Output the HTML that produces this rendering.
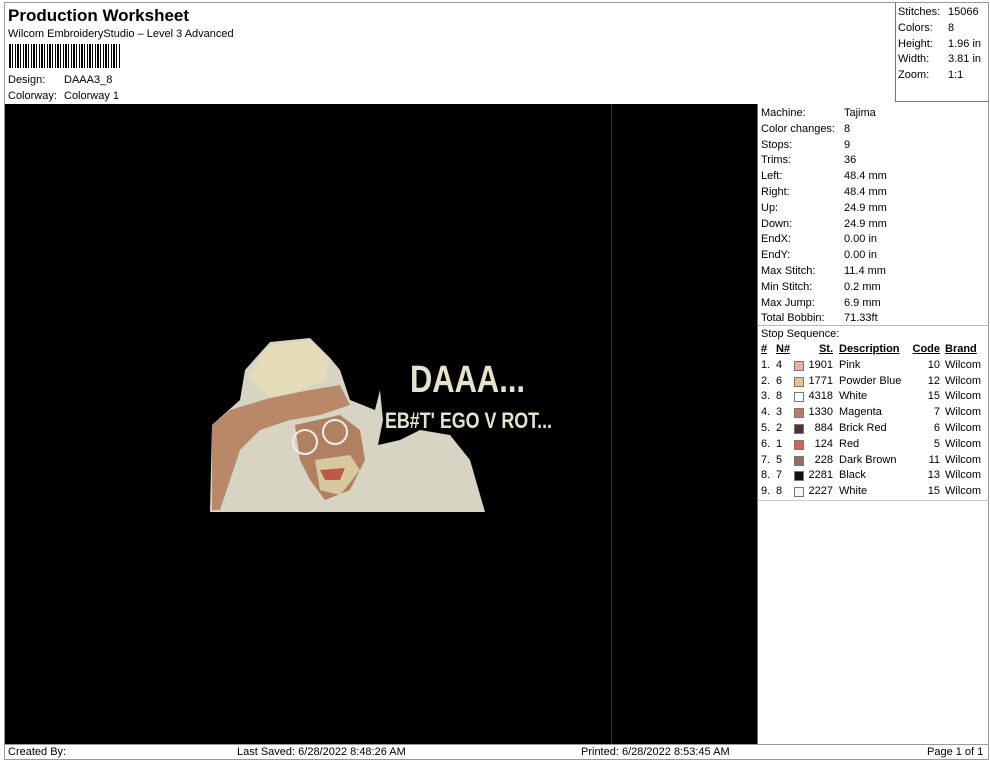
<!DOCTYPE html>
<html><head><meta charset="utf-8"><style>
*{margin:0;padding:0;box-sizing:border-box}
body{width:990px;height:762px;background:#fff;font-family:"Liberation Sans",Arial,sans-serif;color:#000;position:relative;overflow:hidden;font-size:11px}
.a{position:absolute;white-space:nowrap}
.r{position:absolute;left:0;width:230px;height:15.8px;line-height:15.8px}
.r span{position:absolute;white-space:nowrap}
.h span{text-decoration:underline;font-weight:bold}
.c1{left:3px}.c2{left:18px}.c3{right:155px;text-align:right}.c4{left:81px}.c5{right:48px}.c6{left:187px}
.sw{position:absolute;left:36px;top:3px;width:10px;height:10px;border:1px solid #777}
</style></head><body>
<div class="a" style="left:4px;top:2px;width:985px;height:758px;border:1px solid #999"></div>
<div class="a" style="left:8px;top:6px;font-size:17px;font-weight:bold">Production Worksheet</div>
<div class="a" style="left:8px;top:28px;font-size:11px">Wilcom EmbroideryStudio – Level 3 Advanced</div>
<div class="a" style="left:9px;top:44px;width:112px;height:24px;background:repeating-linear-gradient(90deg,#000 0 2px,#fff 2px 3px,#000 3px 4px,#fff 4px 6px,#000 6px 7px,#fff 7px 8px)"></div>
<div class="a" style="left:8px;top:74px">Design:</div><div class="a" style="left:64px;top:74px">DAAA3_8</div>
<div class="a" style="left:8px;top:90px">Colorway:</div><div class="a" style="left:64px;top:90px">Colorway 1</div>
<div class="a" style="left:895px;top:3px;width:94px;height:99px;border-left:1px solid #777;border-bottom:1px solid #777"></div>
<div class="a" style="left:898px;top:5px;line-height:15.8px">Stitches:<br>Colors:<br>Height:<br>Width:<br>Zoom:</div>
<div class="a" style="left:948px;top:5px;line-height:15.8px">15066<br>8<br>1.96 in<br>3.81 in<br>1:1</div>
<div class="a" style="left:5px;top:104px;width:752px;height:640px;background:#000"></div>
<div class="a" style="left:611px;top:104px;width:1px;height:640px;background:#333"></div>
<div class="a" style="left:757px;top:104px;width:1px;height:640px;background:#777"></div>
<div class="a" style="left:761px;top:106px;line-height:15.8px">Machine:<br>Color changes:<br>Stops:<br>Trims:<br>Left:<br>Right:<br>Up:<br>Down:<br>EndX:<br>EndY:<br>Max Stitch:<br>Min Stitch:<br>Max Jump:<br>Total Bobbin:<br>Stop Sequence:</div>
<div class="a" style="left:844px;top:106px;line-height:15.8px">Tajima<br>8<br>9<br>36<br>48.4 mm<br>48.4 mm<br>24.9 mm<br>24.9 mm<br>0.00 in<br>0.00 in<br>11.4 mm<br>0.2 mm<br>6.9 mm<br>71.33ft</div>
<div class="a" style="left:758px;top:325px;width:231px;height:1px;background:#bbb"></div>
<div class="a" style="left:758px;top:342px;width:231px;height:160px">
<div class="r h" style="top:0"><span class="c1">#</span><span class="c2">N#</span><span class="c3">St.</span><span class="c4">Description</span><span class="c5">Code</span><span class="c6">Brand</span></div>
<div class="r" style="top:15.8px"><span class="c1">1.</span><span class="c2">4</span><i class="sw" style="background:#e8b0a0"></i><span class="c3">1901</span><span class="c4">Pink</span><span class="c5">10</span><span class="c6">Wilcom</span></div>
<div class="r" style="top:31.6px"><span class="c1">2.</span><span class="c2">6</span><i class="sw" style="background:#e8c090"></i><span class="c3">1771</span><span class="c4">Powder Blue</span><span class="c5">12</span><span class="c6">Wilcom</span></div>
<div class="r" style="top:47.4px"><span class="c1">3.</span><span class="c2">8</span><i class="sw" style="background:#fff"></i><span class="c3">4318</span><span class="c4">White</span><span class="c5">15</span><span class="c6">Wilcom</span></div>
<div class="r" style="top:63.2px"><span class="c1">4.</span><span class="c2">3</span><i class="sw" style="background:#c07860"></i><span class="c3">1330</span><span class="c4">Magenta</span><span class="c5">7</span><span class="c6">Wilcom</span></div>
<div class="r" style="top:79px"><span class="c1">5.</span><span class="c2">2</span><i class="sw" style="background:#503030"></i><span class="c3">884</span><span class="c4">Brick Red</span><span class="c5">6</span><span class="c6">Wilcom</span></div>
<div class="r" style="top:94.8px"><span class="c1">6.</span><span class="c2">1</span><i class="sw" style="background:#d86050"></i><span class="c3">124</span><span class="c4">Red</span><span class="c5">5</span><span class="c6">Wilcom</span></div>
<div class="r" style="top:110.6px"><span class="c1">7.</span><span class="c2">5</span><i class="sw" style="background:#907060"></i><span class="c3">228</span><span class="c4">Dark Brown</span><span class="c5">11</span><span class="c6">Wilcom</span></div>
<div class="r" style="top:126.4px"><span class="c1">8.</span><span class="c2">7</span><i class="sw" style="background:#111"></i><span class="c3">2281</span><span class="c4">Black</span><span class="c5">13</span><span class="c6">Wilcom</span></div>
<div class="r" style="top:142.2px"><span class="c1">9.</span><span class="c2">8</span><i class="sw" style="background:#f4f4f4"></i><span class="c3">2227</span><span class="c4">White</span><span class="c5">15</span><span class="c6">Wilcom</span></div>
</div>
<div class="a" style="left:758px;top:500px;width:231px;height:1px;background:#ccc"></div>
<svg class="a" style="left:200px;top:330px" width="370" height="190">
<path d="M10 182 L12 95 L40 70 L45 40 L70 12 L110 8 L130 28 L140 40 L150 70 L175 80 L180 60 L183 90 L178 115 L200 110 L220 100 L250 105 L270 130 L285 182 Z" fill="#d8d4c4"/>
<path d="M48 45 L70 15 L110 10 L130 28 L125 50 L100 60 L70 68 Z" fill="#e4dcb8"/>
<path d="M12 95 L30 80 L70 68 L110 60 L140 55 L150 75 L120 85 L90 90 L60 100 L40 120 L30 150 L20 180 L12 180 Z" fill="#b88868"/>
<path d="M95 95 L140 85 L160 100 L165 130 L150 160 L125 170 L110 150 L100 130 Z" fill="#b08060"/>
<path d="M115 130 L150 125 L160 140 L140 165 L120 160 Z" fill="#d8c8a0"/>
<path d="M120 140 L145 138 L140 150 L125 150 Z" fill="#c05848"/>
<circle cx="105" cy="112" r="12" fill="none" stroke="#eee" stroke-width="2"/>
<circle cx="135" cy="102" r="12" fill="none" stroke="#eee" stroke-width="2"/>
<text x="210" y="62" font-family="Liberation Sans Narrow,Liberation Sans,sans-serif" font-weight="bold" font-size="38" fill="#e6e2cc" textLength="115" lengthAdjust="spacingAndGlyphs">DAAA...</text>
<text x="185" y="98" font-family="Liberation Sans Narrow,Liberation Sans,sans-serif" font-weight="bold" font-size="22" fill="#e6e2cc" textLength="167" lengthAdjust="spacingAndGlyphs">EB#T' EGO V ROT...</text>
</svg>
<div class="a" style="left:5px;top:744px;width:984px;height:1px;background:#999"></div>
<div class="a" style="left:8px;top:746px">Created By:</div>
<div class="a" style="left:237px;top:746px">Last Saved: 6/28/2022 8:48:26 AM</div>
<div class="a" style="left:581px;top:746px">Printed: 6/28/2022 8:53:45 AM</div>
<div class="a" style="left:927px;top:746px">Page 1 of 1</div>
</body></html>
